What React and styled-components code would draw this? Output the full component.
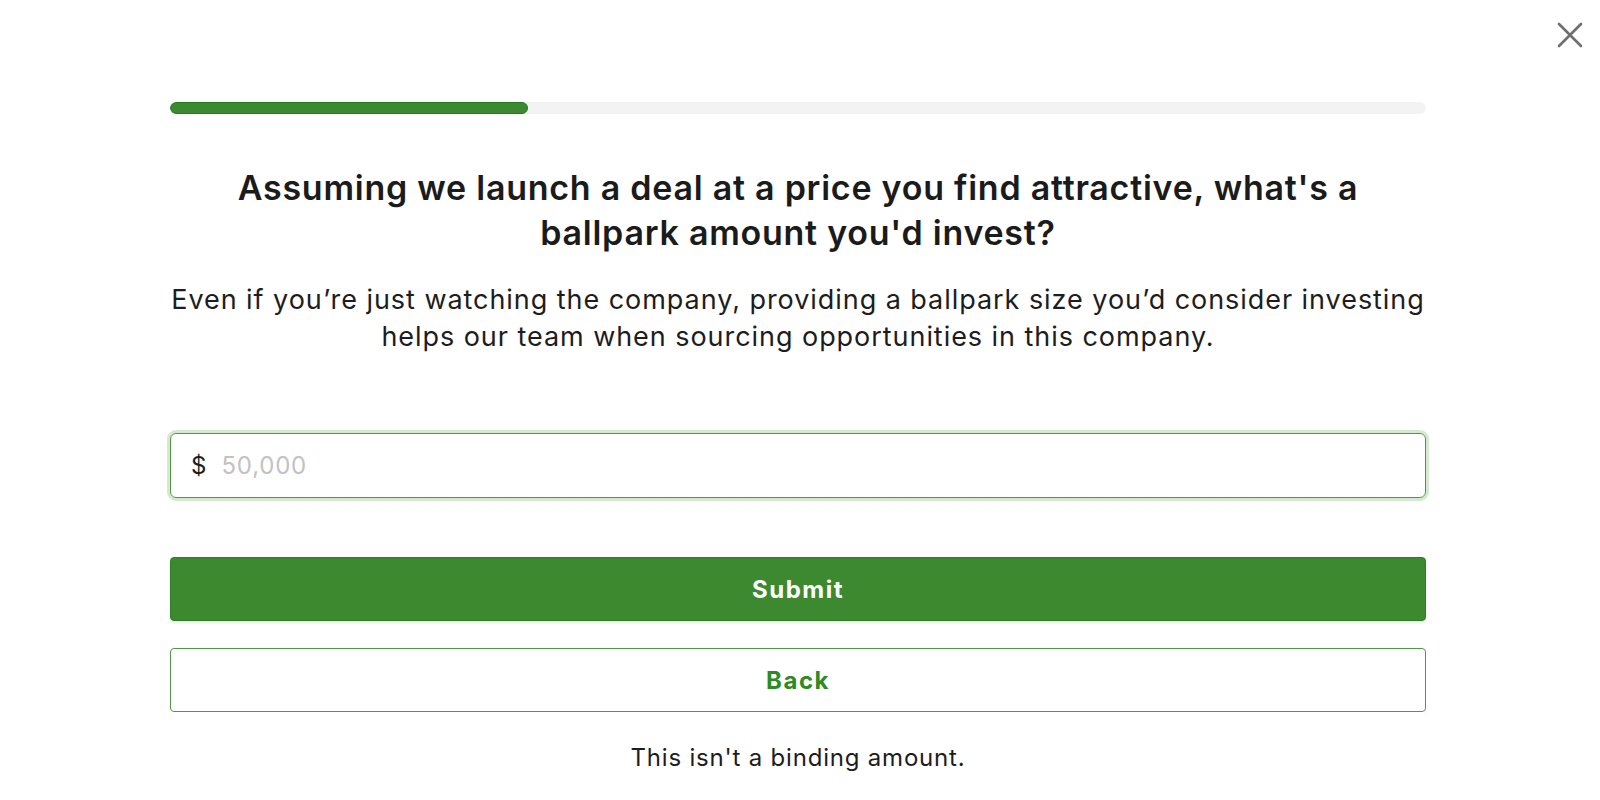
import React, { useState } from 'react';
import styled, { createGlobalStyle } from 'styled-components';

const GlobalStyle = createGlobalStyle`
  html, body {
    margin: 0;
    padding: 0;
    background: #ffffff;
    font-family: Inter, "Open Sans", sans-serif;
    color: #1d1d1d;
  }
  * {
    box-sizing: border-box;
  }
`;

const Page = styled.div`
  position: relative;
  min-height: 800px;
  padding: 102px 4px 0 0;
`;

const CloseButton = styled.button`
  position: absolute;
  top: 20px;
  right: 15px;
  width: 30px;
  height: 30px;
  padding: 0;
  border: none;
  background: transparent;
  cursor: pointer;
  display: flex;
  align-items: center;
  justify-content: center;
`;

const Column = styled.div`
  width: 1256px;
  margin: 0 auto;
  display: flex;
  flex-direction: column;
`;

const Track = styled.div`
  height: 12px;
  border-radius: 6px;
  background: #f3f3f3;
  overflow: hidden;
`;

const Fill = styled.div`
  height: 100%;
  border-radius: 6px;
  background: #3c8931;
  border: 1px solid #1d7d16;
`;

const Heading = styled.h1`
  margin: 51px 0 0;
  font-size: 34px;
  line-height: 45px;
  font-weight: 600;
  letter-spacing: 0.75px;
  white-space: nowrap;
  text-align: center;
  color: #1b1b1b;
`;

const Lead = styled.p`
  margin: 26px 0 0;
  font-size: 27px;
  line-height: 37px;
  font-weight: 400;
  letter-spacing: 0.95px;
  white-space: nowrap;
  text-align: center;
  color: #1d1d1d;
`;

const AmountField = styled.label`
  margin-top: 78px;
  height: 65px;
  display: flex;
  align-items: center;
  gap: 15px;
  padding: 0 20px;
  border: 1px solid #4c9a40;
  border-radius: 6px;
  box-shadow: 0 0 0 3px #d5e8d0;
`;

const Currency = styled.span`
  font-size: 24px;
  color: #1d1d1d;
`;

const AmountInput = styled.input`
  flex: 1;
  border: none;
  outline: none;
  background: transparent;
  font-family: inherit;
  font-size: 24px;
  letter-spacing: 0.8px;
  color: #1d1d1d;
  padding: 0;

  &::placeholder {
    color: #c2c2c2;
  }
`;

const Button = styled.button`
  height: 64px;
  width: 100%;
  border-radius: 4px;
  font-family: inherit;
  font-size: 24px;
  font-weight: 700;
  letter-spacing: 1.5px;
  cursor: pointer;
  margin-top: ${p => p.$gap}px;
  background: ${p => (p.$outline ? '#ffffff' : '#3d8930')};
  color: ${p => (p.$outline ? '#2f8a25' : '#ffffff')};
  border: 1px solid ${p => (p.$outline ? '#4d9a44' : '#2f7f22')};
  box-shadow: ${p => (p.$outline ? 'none' : '0 2px 3px rgba(0, 0, 0, 0.08)')};
`;

const Note = styled.p`
  margin: 31px 0 0;
  font-size: 24px;
  line-height: 30px;
  letter-spacing: 0.8px;
  text-align: center;
  color: #1d1d1d;
`;

const CloseIcon = () => (
  <svg width="26" height="26" viewBox="0 0 26 26" fill="none">
    <path d="M2 2L24 24M24 2L2 24" stroke="#6e6e6e" strokeWidth="2.6" strokeLinecap="round" />
  </svg>
);

const App = () => {
  const [amount, setAmount] = useState('');
  const progress = 28.5;

  return (
    <Page>
      <GlobalStyle />
      <CloseButton aria-label="Close">
        <CloseIcon />
      </CloseButton>
      <Column>
        <Track>
          <Fill style={{ width: `${progress}%` }} />
        </Track>
        <Heading>
          Assuming we launch a deal at a price you find attractive, what's a<br />
          ballpark amount you'd invest?
        </Heading>
        <Lead>
          Even if you’re just watching the company, providing a ballpark size you’d consider investing<br />
          helps our team when sourcing opportunities in this company.
        </Lead>
        <AmountField>
          <Currency>$</Currency>
          <AmountInput
            value={amount}
            onChange={e => setAmount(e.target.value)}
            placeholder="50,000"
          />
        </AmountField>
        <Button $gap={59}>Submit</Button>
        <Button $gap={27} $outline>Back</Button>
        <Note>This isn't a binding amount.</Note>
      </Column>
    </Page>
  );
};

export default App;
